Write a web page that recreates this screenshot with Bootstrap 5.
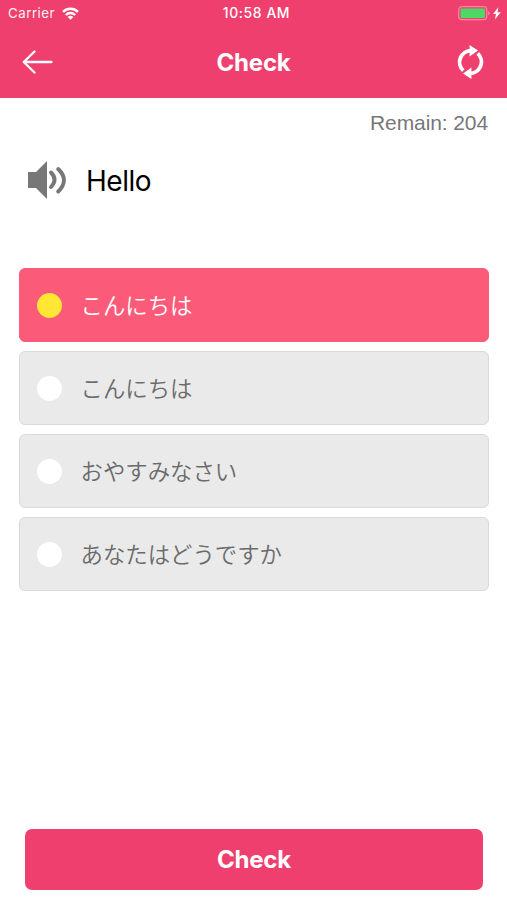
<!DOCTYPE html>
<html lang="en">
<head>
<meta charset="utf-8">
<meta name="viewport" content="width=device-width, initial-scale=1">
<title>Check</title>
<link href="https://cdn.jsdelivr.net/npm/bootstrap@5.3.0/dist/css/bootstrap.min.css" rel="stylesheet">
<style>
  body { font-family: Inter, "Noto Sans CJK JP", sans-serif; background: #fff; }
  svg { display: block; flex: none; }
  .app-head { height: 98px; background: #ef3f6e; }
  .status-bar { height: 27px; font-size: 13.3px; line-height: 27px; padding: 0 6px 0 8px; }
  .status-bar .carrier { letter-spacing: .5px; opacity: .92; width: 46px; white-space: nowrap; }
  .status-bar .clock { font-weight: 500; font-size: 13.9px; letter-spacing: .6px; padding-left: 4px; }
  .side { flex: 1 1 0; }
  .title-bar { height: 71px; padding: 0 22px; }
  .title-bar .refresh { margin-bottom: 2px; }
  .screen-title { font-size: 24px; font-weight: 650; line-height: 30px; letter-spacing: -.2px; }
  .remain { font: 21px/26px "Liberation Sans", Arial, sans-serif; letter-spacing: -.1px; color: #777; padding: 12px 19px 0 0; height: 63px; }
  .prompt { padding-left: 27px; height: 40px; gap: 19px; margin-bottom: 67px; }
  .prompt-word { font-size: 28px; line-height: 40px; color: #000; letter-spacing: -.5px; }
  .prompt svg { margin-bottom: 2px; }
  .answers { padding: 0 18px 0 19px; gap: 9.1px; }
  .answer { height: 74px; border: 1px solid #d9d9d9; border-radius: 6px; background: #eaeaea; color: #6b6b6b; padding-left: 17px; gap: 18.5px; font: 350 22.4px/32px "Noto Sans CJK JP", sans-serif; }
  .answer > span:last-child { padding-bottom: 3px; }
  .answer.chosen { background: #fb5b78; border-color: #fb5b78; color: #fff; }
  .dot { width: 25px; height: 25px; background: #fff; flex: none; }
  .chosen .dot { background: #ffe733; }
  .submit { height: 61px; margin: 0 24px 10px 25px; background: #ef3f6e; border: 0; border-radius: 7px; padding: 0; }
  .submit:hover { background: #e23865; }
</style>
</head>
<body>
<div class="d-flex flex-column vh-100 overflow-hidden">
  <header class="app-head text-white flex-shrink-0">
    <div class="status-bar d-flex align-items-center">
      <div class="side d-flex align-items-center">
        <span class="carrier">Carrier</span>
        <svg class="ms-2" width="17" height="13" viewBox="0 0 18 14" fill="none" stroke="#fff" stroke-width="2.600"><path d="M1 5.200a11.300 11.300 0 0 1 16 0M4 8.600a7.100 7.100 0 0 1 10 0"/><path d="M9 13.600 5.900 10.900a4.500 4.500 0 0 1 6.200 0z" fill="#fff" stroke="none"/></svg>
      </div>
      <span class="clock">10:58 AM</span>
      <div class="side d-flex justify-content-end align-items-center">
        <svg width="43" height="15" viewBox="0 0 43 15"><rect x=".7" y=".7" width="28" height="13" rx="3" fill="none" stroke="#f58aa5" stroke-width="1.200"/><rect x="2.500" y="2.500" width="24.400" height="9.400" rx="1" fill="#4cd964"/><path d="M30.200 5v4.500q1.500-.8 1.500-2.250T30.200 5z" fill="#f58aa5"/><path d="M40.300 1.200 35 8h3l-1.100 5.600L42.800 6.300h-3.200z" fill="#fff"/></svg>
      </div>
    </div>
    <div class="title-bar d-flex align-items-center">
      <div class="side">
        <svg width="31" height="25" viewBox="0 0 31 25" fill="none" stroke="#fff" stroke-width="2.300" stroke-linecap="round" stroke-linejoin="round"><path d="M12.500 1.500 1.800 12l10.700 10.500"/><path d="M2 12h27.500"/></svg>
      </div>
      <h1 class="screen-title m-0">Check</h1>
      <div class="side d-flex justify-content-end">
        <svg class="refresh" width="28" height="34" viewBox="0 0 28 34"><g fill="none" stroke="#fff" stroke-width="3.800"><path d="M6.300 25.700A11.600 11.600 0 0 1 14.500 5.600"/><path d="M20.700 8.300A11.600 11.600 0 0 1 12.500 28.400"/></g><path d="M12.600 0v11.600l8.400-6zM14.400 34V22.400l-8.400 6z" fill="#fff"/></svg>
      </div>
    </div>
  </header>

  <main class="flex-grow-1 d-flex flex-column">
    <div class="remain text-end">Remain: 204</div>
    <div class="prompt d-flex align-items-center">
      <svg width="40" height="38" viewBox="0 0 40 38"><path d="M1 11h8L20 0v38L9 27H1z" fill="#777"/><g fill="none" stroke="#777" stroke-width="3.900" stroke-linecap="round"><path d="M24 11.500q7 7 0 14.500"/><path d="M31.200 8q11.500 11 0 22.500"/></g></svg>
      <span class="prompt-word">Hello</span>
    </div>
    <div class="answers d-flex flex-column" lang="ja">
      <div class="answer chosen d-flex align-items-center"><span class="dot rounded-circle"></span><span>こんにちは</span></div>
      <div class="answer d-flex align-items-center"><span class="dot rounded-circle"></span><span>こんにちは</span></div>
      <div class="answer d-flex align-items-center"><span class="dot rounded-circle"></span><span>おやすみなさい</span></div>
      <div class="answer d-flex align-items-center"><span class="dot rounded-circle"></span><span>あなたはどうですか</span></div>
    </div>
    <button type="button" class="submit btn text-white mt-auto screen-title">Check</button>
  </main>
</div>
<script src="https://cdn.jsdelivr.net/npm/bootstrap@5.3.0/dist/js/bootstrap.bundle.min.js"></script>
</body>
</html>
